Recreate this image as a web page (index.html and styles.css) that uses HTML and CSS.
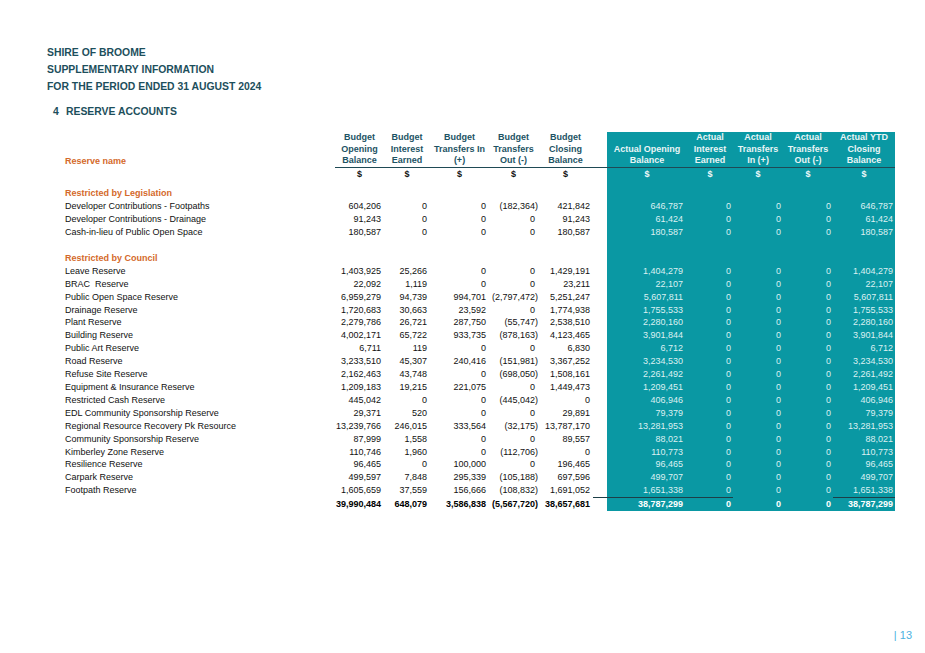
FILE: index.html
```html
<!DOCTYPE html>
<html>
<head>
<meta charset="utf-8">
<title>Reserve Accounts</title>
<link rel="stylesheet" href="styles.css">
</head>
<body>
<div class="page">
  <div class="titles">
    <div>SHIRE OF BROOME</div>
    <div>SUPPLEMENTARY INFORMATION</div>
    <div>FOR THE PERIOD ENDED 31 AUGUST 2024</div>
  </div>
  <div class="section-title"><span class="num">4</span>RESERVE ACCOUNTS</div>
  <table class="tbl">
    <colgroup>
      <col class="w-name"><col class="w49"><col class="w46"><col class="w59"><col class="w49"><col class="w55"><col class="w14"><col class="w80"><col class="w46"><col class="w50"><col class="w50"><col class="w62">
    </colgroup>
    <tr class="head">
      <th class="rn">Reserve name</th>
      <th class="bh">Budget<br>Opening<br>Balance</th>
      <th class="bh">Budget<br>Interest<br>Earned</th>
      <th class="bh">Budget<br>Transfers In<br>(+)</th>
      <th class="bh">Budget<br>Transfers<br>Out (-)</th>
      <th class="bh">Budget<br>Closing<br>Balance</th>
      <th class="bh"></th>
      <th class="ah">Actual Opening<br>Balance</th>
      <th class="ah">Actual<br>Interest<br>Earned</th>
      <th class="ah">Actual<br>Transfers<br>In (+)</th>
      <th class="ah">Actual<br>Transfers<br>Out (-)</th>
      <th class="ah">Actual YTD<br>Closing<br>Balance</th>
    </tr>
    <tr class="cur">
      <td></td><td>$</td><td>$</td><td>$</td><td>$</td><td>$</td><td></td>
      <td class="a">$</td><td class="a">$</td><td class="a">$</td><td class="a">$</td><td class="a">$</td>
    </tr>
    <tr class="spacer"><td></td><td></td><td></td><td></td><td></td><td></td><td></td><td class="a"></td><td class="a"></td><td class="a"></td><td class="a"></td><td class="a"></td></tr>
    <tr class="sec"><td>Restricted by Legislation</td><td></td><td></td><td></td><td></td><td></td><td></td><td class="a"></td><td class="a"></td><td class="a"></td><td class="a"></td><td class="a"></td></tr>
    <tr><td>Developer Contributions - Footpaths</td><td>604,206</td><td>0</td><td>0</td><td><span class="neg">(182,364)</span></td><td>421,842</td><td></td><td class="a">646,787</td><td class="a">0</td><td class="a">0</td><td class="a">0</td><td class="a">646,787</td></tr>
    <tr><td>Developer Contributions - Drainage</td><td>91,243</td><td>0</td><td>0</td><td>0</td><td>91,243</td><td></td><td class="a">61,424</td><td class="a">0</td><td class="a">0</td><td class="a">0</td><td class="a">61,424</td></tr>
    <tr><td>Cash-in-lieu of Public Open Space</td><td>180,587</td><td>0</td><td>0</td><td>0</td><td>180,587</td><td></td><td class="a">180,587</td><td class="a">0</td><td class="a">0</td><td class="a">0</td><td class="a">180,587</td></tr>
    <tr><td></td><td></td><td></td><td></td><td></td><td></td><td></td><td class="a"></td><td class="a"></td><td class="a"></td><td class="a"></td><td class="a"></td></tr>
    <tr class="sec"><td>Restricted by Council</td><td></td><td></td><td></td><td></td><td></td><td></td><td class="a"></td><td class="a"></td><td class="a"></td><td class="a"></td><td class="a"></td></tr>
    <tr><td>Leave Reserve</td><td>1,403,925</td><td>25,266</td><td>0</td><td>0</td><td>1,429,191</td><td></td><td class="a">1,404,279</td><td class="a">0</td><td class="a">0</td><td class="a">0</td><td class="a">1,404,279</td></tr>
    <tr><td>BRAC&nbsp; Reserve</td><td>22,092</td><td>1,119</td><td>0</td><td>0</td><td>23,211</td><td></td><td class="a">22,107</td><td class="a">0</td><td class="a">0</td><td class="a">0</td><td class="a">22,107</td></tr>
    <tr><td>Public Open Space Reserve</td><td>6,959,279</td><td>94,739</td><td>994,701</td><td><span class="neg">(2,797,472)</span></td><td>5,251,247</td><td></td><td class="a">5,607,811</td><td class="a">0</td><td class="a">0</td><td class="a">0</td><td class="a">5,607,811</td></tr>
    <tr><td>Drainage Reserve</td><td>1,720,683</td><td>30,663</td><td>23,592</td><td>0</td><td>1,774,938</td><td></td><td class="a">1,755,533</td><td class="a">0</td><td class="a">0</td><td class="a">0</td><td class="a">1,755,533</td></tr>
    <tr><td>Plant Reserve</td><td>2,279,786</td><td>26,721</td><td>287,750</td><td><span class="neg">(55,747)</span></td><td>2,538,510</td><td></td><td class="a">2,280,160</td><td class="a">0</td><td class="a">0</td><td class="a">0</td><td class="a">2,280,160</td></tr>
    <tr><td>Building Reserve</td><td>4,002,171</td><td>65,722</td><td>933,735</td><td><span class="neg">(878,163)</span></td><td>4,123,465</td><td></td><td class="a">3,901,844</td><td class="a">0</td><td class="a">0</td><td class="a">0</td><td class="a">3,901,844</td></tr>
    <tr><td>Public Art Reserve</td><td>6,711</td><td>119</td><td>0</td><td>0</td><td>6,830</td><td></td><td class="a">6,712</td><td class="a">0</td><td class="a">0</td><td class="a">0</td><td class="a">6,712</td></tr>
    <tr><td>Road Reserve</td><td>3,233,510</td><td>45,307</td><td>240,416</td><td><span class="neg">(151,981)</span></td><td>3,367,252</td><td></td><td class="a">3,234,530</td><td class="a">0</td><td class="a">0</td><td class="a">0</td><td class="a">3,234,530</td></tr>
    <tr><td>Refuse Site Reserve</td><td>2,162,463</td><td>43,748</td><td>0</td><td><span class="neg">(698,050)</span></td><td>1,508,161</td><td></td><td class="a">2,261,492</td><td class="a">0</td><td class="a">0</td><td class="a">0</td><td class="a">2,261,492</td></tr>
    <tr><td>Equipment &amp; Insurance Reserve</td><td>1,209,183</td><td>19,215</td><td>221,075</td><td>0</td><td>1,449,473</td><td></td><td class="a">1,209,451</td><td class="a">0</td><td class="a">0</td><td class="a">0</td><td class="a">1,209,451</td></tr>
    <tr><td>Restricted Cash Reserve</td><td>445,042</td><td>0</td><td>0</td><td><span class="neg">(445,042)</span></td><td>0</td><td></td><td class="a">406,946</td><td class="a">0</td><td class="a">0</td><td class="a">0</td><td class="a">406,946</td></tr>
    <tr><td>EDL Community Sponsorship Reserve</td><td>29,371</td><td>520</td><td>0</td><td>0</td><td>29,891</td><td></td><td class="a">79,379</td><td class="a">0</td><td class="a">0</td><td class="a">0</td><td class="a">79,379</td></tr>
    <tr><td>Regional Resource Recovery Pk Resource</td><td>13,239,766</td><td>246,015</td><td>333,564</td><td><span class="neg">(32,175)</span></td><td>13,787,170</td><td></td><td class="a">13,281,953</td><td class="a">0</td><td class="a">0</td><td class="a">0</td><td class="a">13,281,953</td></tr>
    <tr><td>Community Sponsorship Reserve</td><td>87,999</td><td>1,558</td><td>0</td><td>0</td><td>89,557</td><td></td><td class="a">88,021</td><td class="a">0</td><td class="a">0</td><td class="a">0</td><td class="a">88,021</td></tr>
    <tr><td>Kimberley Zone Reserve</td><td>110,746</td><td>1,960</td><td>0</td><td><span class="neg">(112,706)</span></td><td>0</td><td></td><td class="a">110,773</td><td class="a">0</td><td class="a">0</td><td class="a">0</td><td class="a">110,773</td></tr>
    <tr><td>Resilience Reserve</td><td>96,465</td><td>0</td><td>100,000</td><td>0</td><td>196,465</td><td></td><td class="a">96,465</td><td class="a">0</td><td class="a">0</td><td class="a">0</td><td class="a">96,465</td></tr>
    <tr><td>Carpark Reserve</td><td>499,597</td><td>7,848</td><td>295,339</td><td><span class="neg">(105,188)</span></td><td>697,596</td><td></td><td class="a">499,707</td><td class="a">0</td><td class="a">0</td><td class="a">0</td><td class="a">499,707</td></tr>
    <tr class="last"><td>Footpath Reserve</td><td>1,605,659</td><td>37,559</td><td>156,666</td><td><span class="neg">(108,832)</span></td><td>1,691,052</td><td class="ul"></td><td class="a ul">1,651,338</td><td class="a ul">0</td><td class="a">0</td><td class="a">0</td><td class="a ul">1,651,338</td></tr>
    <tr class="total"><td></td><td>39,990,484</td><td>648,079</td><td>3,586,838</td><td><span class="neg">(5,567,720)</span></td><td>38,657,681</td><td></td><td class="a">38,787,299</td><td class="a">0</td><td class="a">0</td><td class="a">0</td><td class="a">38,787,299</td></tr>
  </table>
  <div class="footer">| 13</div>
</div>
</body>
</html>
```
FILE: styles.css
```css
html, body {
  margin: 0;
  padding: 0;
  background: #ffffff;
}
body {
  font-family: "Liberation Sans", Arial, sans-serif;
  color: #111111;
}
.page {
  width: 925px;
  height: 653px;
  box-sizing: border-box;
  padding: 44px 0 0 47px;
  display: flex;
  flex-direction: column;
}
.titles {
  font-size: 10.4px;
  font-weight: bold;
  color: #1d4f5c;
  line-height: 17px;
}
.section-title {
  margin-top: 8px;
  font-size: 10.4px;
  font-weight: bold;
  color: #1d4f5c;
  line-height: 17px;
  padding-left: 6px;
}
.section-title .num {
  display: inline-block;
  width: 13px;
}
.tbl {
  margin-top: 12px;
  margin-left: 18px;
  border-collapse: collapse;
  border-spacing: 0;
  table-layout: fixed;
  width: 830px;
  font-size: 9px;
}
.w-name { width: 270px; }
.w49 { width: 49px; }
.w46 { width: 46px; }
.w59 { width: 59px; }
.w55 { width: 55px; }
.w14 { width: 14px; }
.w80 { width: 80px; }
.w50 { width: 50px; }
.w62 { width: 62px; }
.tbl th {
  padding: 0;
  font-weight: bold;
  line-height: 11.5px;
  vertical-align: bottom;
  text-align: center;
  white-space: nowrap;
  border-bottom: 1px solid #1f4a55;
}
.tbl th.rn {
  text-align: left;
  color: #d4692b;
  border-bottom: none;
}
.tbl th.bh {
  color: #1d5364;
}
.tbl th.ah {
  color: #e9f5f6;
  background: #0a98a3;
}
.tbl td {
  padding: 0;
  height: 12.9px;
  line-height: 12.9px;
  text-align: right;
  white-space: nowrap;
  vertical-align: middle;
}
.tbl td:first-child {
  text-align: left;
}
.tbl td:nth-child(2) { padding-right: 3px; }
.tbl td:nth-child(3) { padding-right: 3px; }
.tbl td:nth-child(4) { padding-right: 3px; }
.tbl td:nth-child(5) { padding-right: 3px; }
.tbl td:nth-child(6) { padding-right: 3px; }
.tbl td:nth-child(8) { padding-right: 4px; }
.tbl td:nth-child(9) { padding-right: 2px; }
.tbl td:nth-child(10) { padding-right: 2px; }
.tbl td:nth-child(11) { padding-right: 2px; }
.tbl td:nth-child(12) { padding-right: 2px; }
.tbl td.a {
  background: #0a98a3;
  color: #dcf0f2;
}
.neg {
  margin-right: -3px;
}
.cur td {
  font-weight: bold;
  text-align: center !important;
  padding-right: 0 !important;
}
.cur td.a {
  color: #eef8f9;
}
.tbl tr.spacer td {
  height: 7px;
  line-height: 7px;
}
.sec td:first-child {
  color: #d4692b;
  font-weight: bold;
}
.total td {
  font-weight: bold;
  color: #000000;
}
.total td.a {
  color: #ffffff;
}
.tbl td.ul {
  border-bottom: 1px solid #1d3f48;
}
.footer {
  margin-top: auto;
  margin-bottom: 11px;
  align-self: flex-end;
  margin-right: 13px;
  font-size: 11px;
  color: #4db2df;
  line-height: 13px;
}
```
